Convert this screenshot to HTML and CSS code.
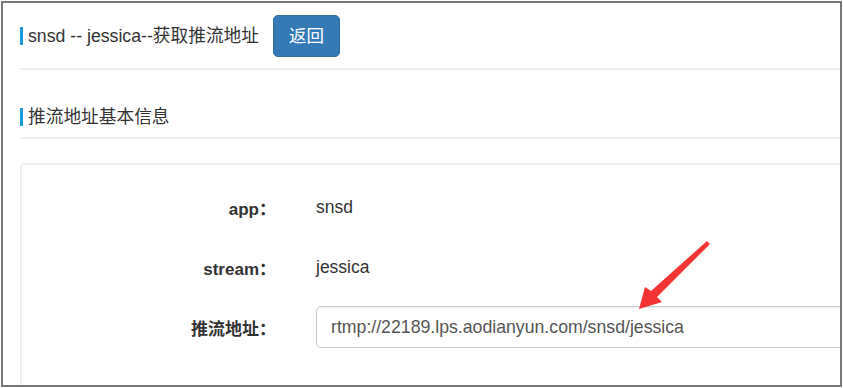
FILE: index.html
```html
<!DOCTYPE html>
<html lang="zh-CN">
<head>
    <meta charset="UTF-8">
    <meta name="viewport" content="width=device-width, initial-scale=1.0">
    <title>获取推流地址</title>
    <link rel="stylesheet" href="styles.css">
</head>
<body>
    <div class="frame">
        <div class="page-head">
            <span class="title">snsd -- jessica--获取推流地址</span>
            <button class="btn">返回</button>
        </div>

        <div class="section-head">
            <span class="title">推流地址基本信息</span>
        </div>

        <div class="card">
            <div class="row">
                <label class="label">app：</label>
                <div class="value">snsd</div>
            </div>
            <div class="row">
                <label class="label">stream：</label>
                <div class="value">jessica</div>
            </div>
            <div class="row">
                <label class="label">推流地址：</label>
                <input class="input" type="text" value="rtmp://22189.lps.aodianyun.com/snsd/jessica" readonly>
            </div>
        </div>

        <svg class="arrow" viewBox="630 238 85 77" width="85" height="77">
            <polygon points="707,241 710,244 657,297 662,302 639,309 645,287 651,291" fill="#f53535"/>
        </svg>
    </div>
</body>
</html>
```

FILE: styles.css
```css
body {
    margin: 0;
    font-family: "Liberation Sans", "Noto Sans CJK SC", sans-serif;
    color: #333;
    background: #fff;
}
.frame {
    position: relative;
    margin: 1px;
    width: 841px;
    height: 386px;
    box-sizing: border-box;
    border: 2px solid #777;
    overflow: hidden;
    padding: 12px 0 0 17px;
}
.title {
    display: block;
    font-size: 17.7px;
    line-height: 18px;
    border-left: 3px solid #1d9ad6;
    padding-left: 5px;
}
.page-head {
    display: flex;
    align-items: center;
    gap: 14px;
    padding-bottom: 11px;
    border-bottom: 2px solid #eee;
}
.btn {
    font-family: inherit;
    font-size: 17.5px;
    line-height: 25px;
    padding: 7.5px 15px;
    color: #fff;
    background: #337ab7;
    border: 1px solid #2e6da4;
    border-radius: 5px;
    cursor: pointer;
}
.section-head {
    margin-top: 38px;
    padding-bottom: 11px;
    border-bottom: 2px solid #eee;
}
.card {
    margin-top: 24px;
    margin-right: -200px;
    border: 2px solid #eee;
    border-radius: 5px;
    padding: 21px 0 40px;
}
.row {
    display: grid;
    grid-template-columns: 254px 1fr;
    column-gap: 40px;
    align-items: center;
    height: 42px;
    margin-bottom: 18px;
}
.label {
    text-align: right;
    font-weight: bold;
    font-size: 17px;
}
.value {
    font-size: 17.5px;
}
.input {
    display: block;
    width: 700px;
    height: 42px;
    box-sizing: border-box;
    padding: 0 14px;
    font-family: inherit;
    font-size: 17.7px;
    color: #555;
    border: 1px solid #ccc;
    border-radius: 5px;
    box-shadow: inset 0 1px 1px rgba(0, 0, 0, 0.075);
    outline: none;
}
.arrow {
    position: absolute;
    left: 627px;
    top: 235px;
}
```
